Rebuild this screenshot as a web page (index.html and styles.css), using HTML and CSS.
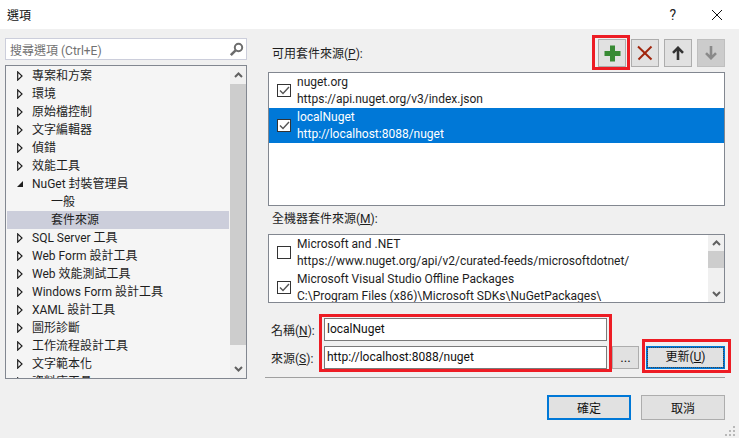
FILE: index.html
```html
<!DOCTYPE html>
<html lang="zh-Hant">
<head>
  <meta charset="UTF-8">
  <meta name="viewport" content="width=device-width, initial-scale=1.0">
  <title>選項</title>
  <link rel="stylesheet" href="styles.css">
</head>
<body>
  <svg class="defs" width="0" height="0">
    <symbol id="closed" viewBox="0 0 6 10"><path d="M0.7 0.9L5 5 0.7 9.1z" stroke="#1e1e1e" stroke-width="1.2" fill="#fff"/></symbol>
    <symbol id="opened" viewBox="0 0 6 10"><path d="M0 8h6V2z" fill="#1e1e1e"/></symbol>
  </svg>
  <div class="dialog">
    <header class="titlebar">
      <span class="title">選項</span>
      <span class="help">?</span>
      <svg class="close" width="12" height="12" viewBox="0 0 12 12"><path d="M1 1l10 10M11 1L1 11" stroke="#111" stroke-width="1" fill="none"/></svg>
    </header>

    <main class="content">
      <!-- left side: search + tree -->
      <section class="left">
        <div class="search">
          <span>搜尋選項 (Ctrl+E)</span>
          <svg width="15" height="15" viewBox="0 0 15 15"><circle cx="9.5" cy="5.5" r="3.7" stroke="#6d6d6d" stroke-width="2" fill="none"/><path d="M6.6 8.4L1.8 13.2" stroke="#6d6d6d" stroke-width="2.6"/></svg>
        </div>
        <div class="tree">
          <ul class="rows">
            <li class="row"><svg class="arrow"><use href="#closed"/></svg>專案和方案</li>
            <li class="row"><svg class="arrow"><use href="#closed"/></svg>環境</li>
            <li class="row"><svg class="arrow"><use href="#closed"/></svg>原始檔控制</li>
            <li class="row"><svg class="arrow"><use href="#closed"/></svg>文字編輯器</li>
            <li class="row"><svg class="arrow"><use href="#closed"/></svg>偵錯</li>
            <li class="row"><svg class="arrow"><use href="#closed"/></svg>效能工具</li>
            <li class="row"><svg class="arrow"><use href="#opened"/></svg>NuGet 封裝管理員</li>
            <li class="row child">一般</li>
            <li class="row child selected">套件來源</li>
            <li class="row"><svg class="arrow"><use href="#closed"/></svg>SQL Server 工具</li>
            <li class="row"><svg class="arrow"><use href="#closed"/></svg>Web Form 設計工具</li>
            <li class="row"><svg class="arrow"><use href="#closed"/></svg>Web 效能測試工具</li>
            <li class="row"><svg class="arrow"><use href="#closed"/></svg>Windows Form 設計工具</li>
            <li class="row"><svg class="arrow"><use href="#closed"/></svg>XAML 設計工具</li>
            <li class="row"><svg class="arrow"><use href="#closed"/></svg>圖形診斷</li>
            <li class="row"><svg class="arrow"><use href="#closed"/></svg>工作流程設計工具</li>
            <li class="row"><svg class="arrow"><use href="#closed"/></svg>文字範本化</li>
            <li class="row"><svg class="arrow"><use href="#closed"/></svg>資料庫工具</li>
          </ul>
          <div class="scrollbar tree-bar">
            <svg class="chev" width="9" height="6" viewBox="0 0 9 6"><path d="M1 5l3.5-3.5L8 5" stroke="#606060" stroke-width="2" fill="none"/></svg>
            <div class="track"><div class="thumb tree-thumb"></div></div>
            <svg class="chev" width="9" height="6" viewBox="0 0 9 6"><path d="M1 1l3.5 3.5L8 1" stroke="#606060" stroke-width="2" fill="none"/></svg>
          </div>
        </div>
      </section>

      <!-- right side: sources -->
      <section class="right">
        <div class="top-row">
          <span class="label top-label">可用套件來源(<u>P</u>):</span>
          <div class="tools">
            <button class="tool"><svg width="17" height="17" viewBox="0 0 17 17"><path d="M8.5 0.5v16M0.5 8.5h16" stroke="#388a34" stroke-width="5"/></svg></button>
            <button class="tool"><svg width="16" height="16" viewBox="0 0 16 16"><path d="M1 1.5l13.5 13" stroke="#a1260d" stroke-width="2"/><path d="M14.5 1.5L1.5 14.5" stroke="#a1260d" stroke-width="2"/></svg></button>
            <button class="tool"><svg width="12" height="14" viewBox="0 0 12 14"><path d="M6 14V2.5M1 6.8L6 1.8l5 5" stroke="#333" stroke-width="2.6" fill="none"/></svg></button>
            <button class="tool off"><svg width="12" height="14" viewBox="0 0 12 14"><path d="M6 0v11.5M1 7.2l5 5 5-5" stroke="#8a8a8a" stroke-width="2.6" fill="none"/></svg></button>
          </div>
        </div>

        <div class="list list-top">
          <div class="source">
            <span class="check"><svg width="11" height="9" viewBox="0 0 11 9"><path d="M1 4.5L4 7.5 10 1" stroke="#555" stroke-width="1.4" fill="none"/></svg></span>
            <div><div>nuget.org</div><div>https://api.nuget.org/v3/index.json</div></div>
          </div>
          <div class="source active">
            <span class="check"><svg width="11" height="9" viewBox="0 0 11 9"><path d="M1 4.5L4 7.5 10 1" stroke="#555" stroke-width="1.4" fill="none"/></svg></span>
            <div><div>localNuget</div><div>http://localhost:8088/nuget</div></div>
          </div>
        </div>

        <span class="label machine-label">全機器套件來源(<u>M</u>):</span>
        <div class="list list-machine">
          <div class="machine-rows">
            <div class="source">
              <span class="check"></span>
              <div><div>Microsoft and .NET</div><div>https://www.nuget.org/api/v2/curated-feeds/microsoftdotnet/</div></div>
            </div>
            <div class="source">
              <span class="check"><svg width="11" height="9" viewBox="0 0 11 9"><path d="M1 4.5L4 7.5 10 1" stroke="#555" stroke-width="1.4" fill="none"/></svg></span>
              <div><div>Microsoft Visual Studio Offline Packages</div><div>C:\Program Files (x86)\Microsoft SDKs\NuGetPackages\</div></div>
            </div>
          </div>
          <div class="scrollbar machine-bar">
            <svg class="chev" width="9" height="6" viewBox="0 0 9 6"><path d="M1 5l3.5-3.5L8 5" stroke="#606060" stroke-width="2" fill="none"/></svg>
            <div class="track"><div class="thumb machine-thumb"></div></div>
            <svg class="chev" width="9" height="6" viewBox="0 0 9 6"><path d="M1 1l3.5 3.5L8 1" stroke="#606060" stroke-width="2" fill="none"/></svg>
          </div>
        </div>

        <div class="form">
          <div class="form-row">
            <span class="label field-label">名稱(<u>N</u>):</span>
            <div class="input">localNuget</div>
          </div>
          <div class="form-row">
            <span class="label field-label">來源(<u>S</u>):</span>
            <div class="input">http://localhost:8088/nuget</div>
            <button class="browse">...</button>
            <button class="update"><span>更新(<u>U</u>)</span></button>
          </div>
        </div>
        <div class="divider"></div>
        <div class="actions">
          <button class="btn primary">確定</button>
          <button class="btn">取消</button>
        </div>
      </section>
    </main>

    <!-- red annotation boxes drawn over the screenshot -->
    <div class="mark mark-add"></div>
    <div class="mark mark-fields"></div>
    <div class="mark mark-update"></div>

    <svg class="grip" width="12" height="12" viewBox="0 0 12 12"><path d="M8 2h2v2H8zM4 6h2v2H4zM8 6h2v2H8zM0 10h2v2H0zM4 10h2v2H4zM8 10h2v2H8z" fill="#b8b8b8"/></svg>
  </div>
</body>
</html>
```

FILE: styles.css
```css
/* General Reset */
* {
  margin: 0;
  padding: 0;
  box-sizing: border-box;
  font-family: Roboto, "Noto Sans CJK TC", sans-serif;
}

body {
  background: #f0f0f0;
  color: #1e1e1e;
  font-size: 12px;
  overflow: hidden;
}

.defs {
  position: absolute;
}

.dialog {
  position: relative;
  width: 739px;
  height: 438px;
  overflow: hidden;
}

.titlebar {
  height: 29px;
  background: #fff;
  display: flex;
  align-items: center;
  padding: 0 16px 0 7px;
}

.title {
  flex: 1;
  color: #111;
}

.help {
  margin-right: 35px;
  font-size: 14px;
  color: #222;
}

.content {
  display: flex;
  padding: 9px 0 0 5px;
}

/* left */
.left {
  width: 242px;
}

.search {
  height: 22px;
  border: 1px solid #ccceDB;
  background: #fff;
  color: #717171;
  display: flex;
  align-items: center;
  justify-content: space-between;
  padding: 0 2px 0 4px;
}

.tree {
  height: 314px;
  margin-top: 5px;
  border: 1px solid #828790;
  background: #f5f5f5;
  display: flex;
  overflow: hidden;
}

.rows {
  flex: 1;
  list-style: none;
  padding: 1px 1px 0;
}

.row {
  height: 18px;
  line-height: 20px;
  padding-left: 25px;
  display: flex;
  align-items: center;
  white-space: nowrap;
}

.row.child {
  padding-left: 44px;
}

.row.selected {
  background: #cccedb;
}

.arrow {
  width: 6px;
  height: 10px;
  margin-left: -15px;
  margin-right: 9px;
  flex: none;
}

.scrollbar {
  flex: none;
  width: 16px;
  background: #f0f0f0;
  display: flex;
  flex-direction: column;
  align-items: center;
}

.track {
  flex: 1;
  width: 100%;
}

.thumb {
  background: #cdcdcd;
}

.chev {
  flex: none;
  margin: 6px 0;
}

.tree-thumb {
  height: 261px;
}

/* right */
.right {
  width: 457px;
  margin-left: 21px;
}

.top-row {
  height: 33px;
  display: flex;
  align-items: flex-start;
  justify-content: space-between;
  margin-top: 1px;
}

.label {
  padding-left: 4px;
  color: #1e1e1e;
}

.top-label {
  margin-top: 5px;
}

.tools {
  display: flex;
  gap: 5px;
}

.tool {
  width: 28px;
  height: 28px;
  background: #e1e1e1;
  border: 1px solid #adadad;
  display: flex;
  align-items: center;
  justify-content: center;
}

.tool.off {
  background: #cccccc;
  border-color: #bfbfbf;
}

.list {
  border: 1px solid #828790;
  background: #fff;
  overflow: hidden;
}

.list-top {
  height: 134px;
}

.source {
  height: 35px;
  display: flex;
  align-items: center;
  padding-left: 8px;
  gap: 6px;
  line-height: 17px;
  white-space: nowrap;
}

.source.active {
  background: #0078d7;
  color: #fff;
}

.check {
  width: 14px;
  height: 13px;
  border: 1px solid #333;
  background: #fff;
  flex: none;
  display: flex;
  align-items: center;
  justify-content: center;
}

.machine-label {
  display: block;
  height: 28px;
  line-height: 27px;
}

.list-machine {
  height: 69px;
  display: flex;
}

.machine-rows {
  flex: 1;
  overflow: hidden;
}

.machine-bar .chev {
  margin: 5px 0;
}

.machine-thumb {
  height: 17px;
}

.form {
  margin-top: 15px;
  display: flex;
  flex-direction: column;
  gap: 5px;
}

.form-row {
  display: flex;
  align-items: center;
  height: 23px;
}

.field-label {
  width: 56px;
  padding-left: 3px;
}

.input {
  width: 283px;
  height: 23px;
  line-height: 21px;
  border: 1px solid #7a7a7a;
  background: #fff;
  padding-left: 2px;
  color: #111;
}

.browse {
  width: 27px;
  height: 23px;
  margin-left: 5px;
  background: #e1e1e1;
  border: 1px solid #adadad;
  color: #111;
}

.update {
  width: 79px;
  height: 23px;
  margin-left: 7px;
  background: #e1e1e1;
  border: 2px solid #0078d7;
  color: #111;
  font-size: 12px;
}

.update span {
  display: block;
  line-height: 19px;
  outline: 1px dotted #444;
}

.divider {
  width: 460px;
  height: 1px;
  margin: 8px 0 0 -3px;
  background: #a0a0a0;
}

.actions {
  display: flex;
  gap: 10px;
  margin: 17px 0 0 279px;
}

.btn {
  width: 85px;
  height: 25px;
  background: #e1e1e1;
  border: 1px solid #adadad;
  color: #111;
  font-size: 12px;
}

.btn.primary {
  border: 2px solid #0078d7;
}

/* annotation boxes */
.mark {
  position: absolute;
  border: 3px solid #ed1c24;
}

.mark-add {
  left: 592px;
  top: 35px;
  width: 38px;
  height: 35px;
}

.mark-fields {
  left: 319px;
  top: 314px;
  width: 293px;
  height: 58px;
}

.mark-update {
  left: 642px;
  top: 339px;
  width: 89px;
  height: 34px;
}

.grip {
  position: absolute;
  right: 2px;
  bottom: 2px;
}
```
